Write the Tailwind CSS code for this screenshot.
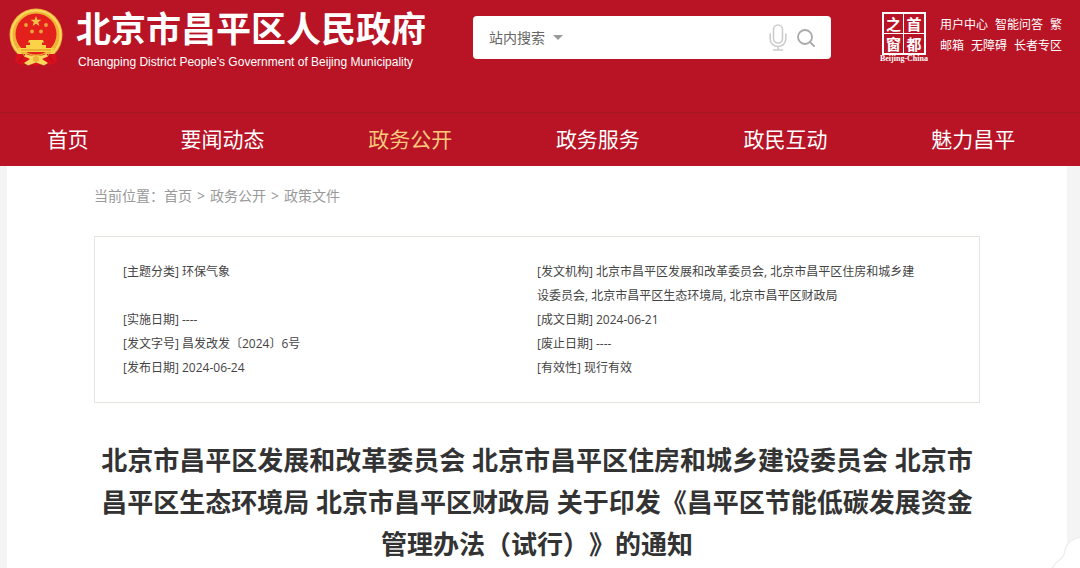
<!DOCTYPE html>
<html lang="zh-CN">
<head>
  <meta charset="UTF-8" />
  <meta name="viewport" content="width=device-width, initial-scale=1.0" />
  <title>北京市昌平区人民政府</title>
  <script src="https://cdn.jsdelivr.net/npm/@tailwindcss/browser@4"></script>
</head>
<body class="bg-[#f4f4f5] font-['Open_Sans','Noto_Sans_CJK_SC',sans-serif] min-h-screen flex flex-col overflow-x-hidden">
  <!-- 页头 -->
  <header class="bg-[#b81426] text-white">
    <div class="h-28 flex items-start pl-2 pr-3">
      <a href="#" class="flex items-start shrink-0">
        <svg class="w-14 h-[60px] mt-[7px]" viewBox="0 0 56 60" aria-hidden="true">
          <circle cx="28" cy="28" r="26.5" fill="#eeb238"/>
          <circle cx="28" cy="28" r="24.5" fill="none" stroke="#fbd75c" stroke-width="2"/>
          <circle cx="28" cy="27" r="20.500" fill="#e4201c"/>
          <path d="M28 9l1.400 3.800h4l-3.200 2.400 1.200 3.900-3.400-2.300-3.400 2.300 1.200-3.900-3.200-2.400h4z" fill="#f3c04a"/>
          <g fill="#e8a43a">
            <circle cx="18" cy="18" r="1.900"/><circle cx="38" cy="18" r="1.900"/>
            <circle cx="24" cy="24.500" r="1.900"/><circle cx="33" cy="24.500" r="1.900"/>
          </g>
          <path d="M21 33h14l1 2.500h-2v2.500h4v3h8l-2 4H12l-2-4h8v-3h4v-2.500h-2z" fill="#fbd348"/>
          <path d="M13 43h30" stroke="#d98a25" stroke-width="1"/>
          <path d="M8 47l12 0 8 3 8-3 12 0 1 8-7 3-6-2-8 3-8-3-6 2-7-3z" fill="#d8101c"/>
          <path d="M16 46q5 3 12 3t12-3l1 3-7 3 6 4-4 2.500-8-3-8 3-4-2.500 6-4-7-3z" fill="#fbd75c"/>
          <circle cx="28" cy="52" r="3" fill="#eeb238"/>
          <path d="M17 47l-6 8M39 47l6 8" stroke="#a90c18" stroke-width="1"/>
        </svg>
        <span class="ml-3 mt-2 flex flex-col">
          <span class="text-[35px] leading-[42px] font-bold">北京市昌平区人民政府</span>
          <span class="text-xs leading-5 pl-0.5 mt-0.5 font-['Liberation_Sans',sans-serif]">Changping District People's Government of Beijing Municipality</span>
        </span>
      </a>

      <!-- 搜索 -->
      <form class="mt-4 ml-[47px] w-[358px] h-[43px] bg-white rounded flex items-center pl-4 pr-4 text-[#666]">
        <span class="relative flex items-center">
          <select aria-label="搜索范围" class="appearance-none bg-transparent text-sm w-[76px] outline-none">
            <option>站内搜索</option>
          </select>
          <svg class="absolute right-0.5 w-2.5 h-[5px] pointer-events-none" viewBox="0 0 10 5" fill="#999"><path d="M0 0h10L5 5z"/></svg>
        </span>
        <input type="search" aria-label="搜索" class="flex-1 min-w-0 h-8 outline-none text-sm">
        <button type="button" aria-label="语音搜索" class="shrink-0">
          <svg class="w-[18px] h-[27px]" viewBox="0 0 18 27" fill="none" stroke="#ccc" stroke-width="1.6" stroke-linecap="round"><rect x="4.5" y="1" width="9" height="18" rx="4.5"/><path d="M1.2 10v5a7.8 7.5 0 0 0 15.6 0v-5M9 22.5V26M4.5 26h9"/></svg>
        </button>
        <button type="submit" aria-label="查询" class="shrink-0 ml-2.5">
          <svg class="w-[18px] h-[18px]" viewBox="0 0 18 18" fill="none" stroke="#aaa" stroke-width="1.8" stroke-linecap="round"><circle cx="8" cy="8" r="7"/><path d="M13 13l4 4"/></svg>
        </button>
      </form>

      <div class="ml-auto flex items-start shrink-0">
        <a href="#" class="mt-3 flex flex-col items-center">
          <span class="grid grid-cols-2 w-11 border-2 border-white text-[15px] leading-[19px] font-bold text-center font-['Noto_Sans_CJK_SC',sans-serif]">
            <span class="h-5 border-r border-b border-white">之</span><span class="h-5 border-b border-white">首</span>
            <span class="h-[19px] border-r border-white">窗</span><span class="h-[19px]">都</span>
          </span>
          <span class="text-[8px] leading-2 font-bold font-['Liberation_Serif',serif]">Beijing-China</span>
        </a>
        <div class="ml-3 mt-[14px] text-xs leading-[21px] w-[128px]">
          <div class="flex gap-[7px]"><a href="#">用户中心</a><a href="#">智能问答</a><a href="#">繁</a></div>
          <div class="flex gap-[7px]"><a href="#">邮箱</a><a href="#">无障碍</a><a href="#">长者专区</a></div>
        </div>
      </div>
    </div>

    <!-- 导航 -->
    <nav class="border-t border-[#9f1824] pl-[7px] pr-[13px] grid grid-cols-[122fr_188fr_188fr_188fr_188fr_188fr] text-center text-[21px] leading-[53px]">
      <a href="#">首页</a>
      <a href="#">要闻动态</a>
      <a href="#" class="text-[#fbc97c]">政务公开</a>
      <a href="#">政务服务</a>
      <a href="#">政民互动</a>
      <a href="#">魅力昌平</a>
    </nav>
  </header>

  <!-- 正文 -->
  <main class="flex-1 bg-white ml-[7px] mr-[13px] px-[87px]">
    <div class="pt-[18px] text-sm leading-6 text-[#999] flex gap-[5px]">
      <span>当前位置：<a href="#">首页</a></span><span>&gt;</span><a href="#">政务公开</a><span>&gt;</span><a href="#">政策文件</a>
    </div>

    <section class="mt-7 border border-[#e5e5e0] pt-[23px] pb-[22px] pl-7 grid grid-cols-[414fr_442fr] text-xs leading-6 text-[#444]">
      <p>[主题分类] 环保气象</p>
      <p class="max-w-[388px]">[发文机构] 北京市昌平区发展和改革委员会, 北京市昌平区住房和城乡建设委员会, 北京市昌平区生态环境局, 北京市昌平区财政局</p>
      <p>[实施日期] ----</p>
      <p>[成文日期] 2024-06-21</p>
      <p>[发文字号] 昌发改发〔2024〕6号</p>
      <p>[废止日期] ----</p>
      <p>[发布日期] 2024-06-24</p>
      <p>[有效性] 现行有效</p>
    </section>

    <h1 class="mt-9 text-[26px] leading-[42px] font-bold text-center text-[#333] [text-spacing-trim:space-all] [font-kerning:none]">北京市昌平区发展和改革委员会 北京市昌平区住房和城乡建设委员会 北京市昌平区生态环境局 北京市昌平区财政局 关于印发《昌平区节能低碳发展资金管理办法（试行）》的通知</h1>
  </main>

  <!-- 右下角悬浮 -->
  <svg class="fixed right-0 bottom-0 w-8 h-8" viewBox="0 0 32 32" aria-hidden="true">
    <path d="M33 1Q24 2 19 9Q17 12 16.500 17Q15 22 10 25Q6 28 4 33H33Z" fill="#fff" stroke="#f0f0f0" stroke-width="1.500"/>
  </svg>
</body>
</html>
